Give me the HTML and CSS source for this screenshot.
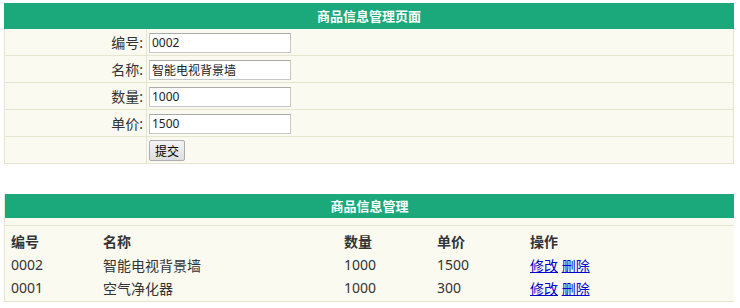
FILE: index.html
```html
<!DOCTYPE html>
<html lang="zh-CN">
<head>
    <meta charset="UTF-8">
    <title>商品信息管理页面</title>
    <link rel="stylesheet" href="styles.css">
</head>
<body>
    <!-- 表单 -->
    <table class="formTable">
        <tr><th colspan="2" class="title">商品信息管理页面</th></tr>
        <tr><td class="label">编号:</td><td><input type="text" class="field" value="0002"></td></tr>
        <tr><td class="label">名称:</td><td><input type="text" class="field" value="智能电视背景墙"></td></tr>
        <tr><td class="label">数量:</td><td><input type="text" class="field" value="1000"></td></tr>
        <tr><td class="label">单价:</td><td><input type="text" class="field" value="1500"></td></tr>
        <tr><td class="label"></td><td><button class="submit">提交</button></td></tr>
    </table>

    <!-- 列表 -->
    <div class="listBox">
        <div class="title listTitle">商品信息管理</div>
        <table class="listTable">
            <tr class="head"><td class="c1">编号</td><td class="c2">名称</td><td class="c3">数量</td><td class="c4">单价</td><td>操作</td></tr>
            <tr><td>0002</td><td>智能电视背景墙</td><td>1000</td><td>1500</td><td><a href="#">修改</a> <a href="#">删除</a></td></tr>
            <tr><td>0001</td><td>空气净化器</td><td>1000</td><td>300</td><td><a href="#">修改</a> <a href="#">删除</a></td></tr>
        </table>
    </div>
</body>
</html>
```

FILE: styles.css
```css
body{
    margin: 3px 0 0 4px;
    width: 730px;
    font-family: "Noto Sans", "Noto Sans CJK SC", sans-serif;
    color: #333;
    background: #fff;
}
.title{
    background-color: #1ba97b;
    color: #fff;
    font-size: 13px;
    font-weight: bold;
    height: 24px;
    line-height: 24px;
    text-align: center;
    padding: 0;
}
.formTable{
    width: 730px;
    border-collapse: collapse;
    background-color: #fafaf1;
}
.formTable td{
    border: 1px solid #e6e6cf;
    height: 26px;
    padding: 0 3px 0 2px;
    font-size: 14px;
}
.formTable th{
    border: 1px solid #1ba97b;
}
.label{
    width: 136px;
    text-align: right;
}
.field{
    width: 136px;
    height: 16px;
    padding: 1px 2px;
    border: 1px solid #c6c6c6;
    border-top-color: #aaa;
    font-size: 12px;
    font-family: "Noto Sans", "Noto Sans CJK SC", sans-serif;
    color: #222;
    margin: 0;
    vertical-align: middle;
}
.submit{
    font-size: 12px;
    font-family: "Noto Sans CJK SC", sans-serif;
    height: 21px;
    padding: 0 5px;
    border: 1px solid #adadad;
    background: linear-gradient(#f4f4f4, #dedede);
    border-radius: 2px;
    margin: 0;
}

.listBox{
    margin-top: 30px;
    border: 1px solid #e6e6cf;
    border-top: none;
    background-color: #fafaf1;
    width: 729px;
    padding-bottom: 2px;
}
.listTable{
    width: 100%;
    border-collapse: collapse;
    margin-top: 7px;
    border-top: 1px solid #e6e6cf;
    font-size: 14px;
    color: #333;
}
.listTable td{
    height: 23px;
    padding: 0 0 0 6px;
}
.listTable .head td{
    font-weight: bold;
    height: 25px;
    padding-top: 2px;
}
.c1{ width: 86px; }
.c2{ width: 235px; }
.c3{ width: 87px; }
.c4{ width: 87px; }
.listTable a{
    color: #00c;
}
```
